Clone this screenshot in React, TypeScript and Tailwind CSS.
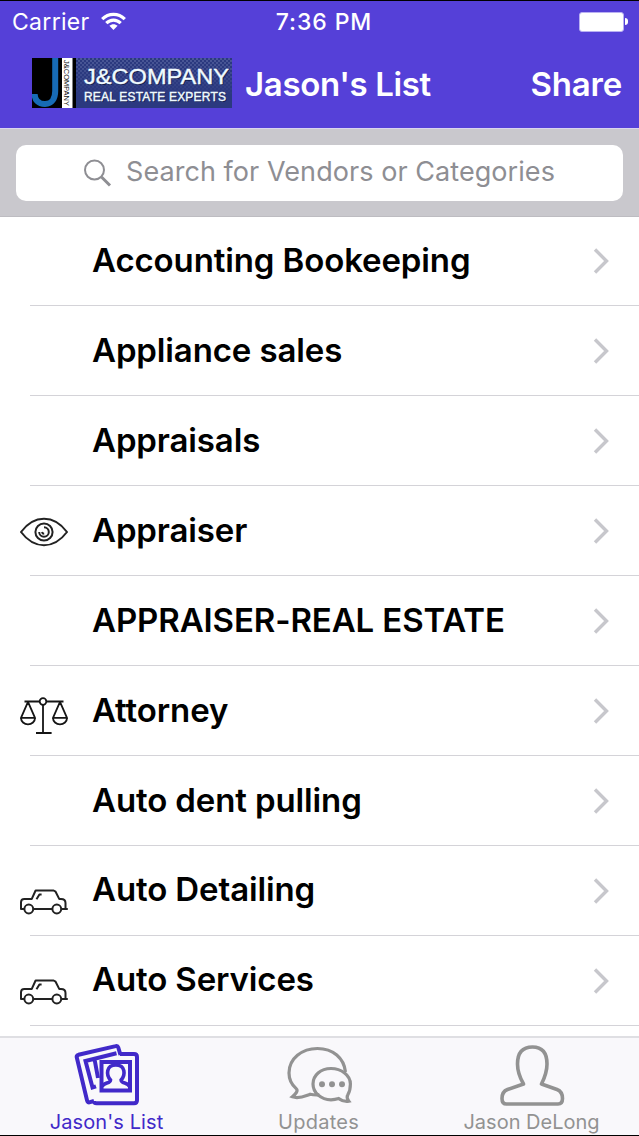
import type { ReactNode } from 'react';

type IconName = 'eye' | 'scales' | 'car';

interface Category {
  name: string;
  icon?: IconName;
}

const categories: Category[] = [
  { name: 'Accounting Bookeeping' },
  { name: 'Appliance sales' },
  { name: 'Appraisals' },
  { name: 'Appraiser', icon: 'eye' },
  { name: 'APPRAISER-REAL ESTATE' },
  { name: 'Attorney', icon: 'scales' },
  { name: 'Auto dent pulling' },
  { name: 'Auto Detailing', icon: 'car' },
  { name: 'Auto Services', icon: 'car' },
];

function EyeIcon() {
  return (
    <svg className="mt-[30px] h-8 w-12" viewBox="0 0 48 32" fill="none" stroke="#222" strokeWidth="2">
      <path d="M1 16C7 8 15 2.800 24 2.800S41 8 47 16C41 24 33 29.200 24 29.200S7 24 1 16Z" strokeLinejoin="round" />
      <circle cx="24" cy="16" r="8.6" />
      <path d="M24 11.200a4.800 4.800 0 1 1-4.800 4.800M22 16a2.200 2.200 0 0 0 2.200 1.800" />
    </svg>
  );
}

function ScalesIcon() {
  return (
    <svg className="mt-[30px] h-[38px] w-12" viewBox="0 0 48 38" fill="none" stroke="#151515" strokeWidth="1.8">
      <path d="M4.500 5.500h15.300M26.200 5.500h17.300M23 8.900v28M16 37h15.600" />
      <circle cx="23" cy="5.500" r="3.300" />
      <path d="M8 5.900 1 21.900h14L8 5.900ZM40 5.900l-7 16h14l-7-16Z" strokeLinejoin="round" />
      <path d="M1 21.900a7 6.500 0 0 0 14 0M33 21.900a7 6.500 0 0 0 14 0" />
    </svg>
  );
}

function CarIcon() {
  return (
    <svg className="mt-[43px] h-[26px] w-12" viewBox="0 0 48 26" fill="none" stroke="#222" strokeWidth="2" strokeLinejoin="round">
      <path d="M4.400 20H1v-6.800c0-2.200 1.300-3.300 3.400-3.300h7.400L15.600 1.500h18l2 1.200 3.600 7.200h1.800c3 0 4.500 1.400 4.500 4V20M13.200 20h19.200M41.400 20h6.400" />
      <circle cx="8.800" cy="20" r="4.400" />
      <circle cx="36.800" cy="20" r="4.400" />
      <path d="M21.600 5.500h-2.200L16.500 10.200" />
    </svg>
  );
}

const rowIcons: Record<IconName, ReactNode> = {
  eye: <EyeIcon />,
  scales: <ScalesIcon />,
  car: <CarIcon />,
};

function StatusBar() {
  return (
    <div className="flex h-[41px] items-center justify-between pr-[11px] pl-3">
      <div className="flex w-[170px] items-center gap-[11px]">
        <span className="pt-px text-[23px] tracking-[0.3px]">Carrier</span>
        <svg className="h-[19px] w-[25px]" viewBox="0 0 25 19" fill="none" stroke="currentColor" strokeWidth="3.2">
          <path d="M1.200 7.200c6.400-6.500 16.200-6.500 22.600 0M5.300 11.200c4.200-4.100 10.200-4.100 14.400 0" />
          <path d="m12.500 18-4.100-4.200c2.300-2.200 5.900-2.200 8.200 0L12.500 18Z" fill="currentColor" stroke="none" />
        </svg>
      </div>
      <span className="pt-px pl-[8px] text-[23px] font-medium tracking-[0.9px]">7:36 PM</span>
      <div className="flex w-[170px] items-center justify-end gap-px">
        <div className="h-5 w-[45px] rounded-[3px] border border-[#b9b0f2] bg-white" />
        <div className="h-[7px] w-[3px] rounded-r-full bg-white" />
      </div>
    </div>
  );
}

function CompanyLogo() {
  return (
    <svg className="mb-[4px] h-[50px] w-[200px]" viewBox="0 0 200 50">
      <defs>
        <pattern id="dots" width="4" height="4" patternUnits="userSpaceOnUse">
          <path d="M0 0h2v2H0ZM2 2h2v2H2Z" fill="#6570aa" opacity=".55" />
        </pattern>
        <linearGradient id="fade" x1="0" y1="0" x2="0" y2="1">
          <stop offset="0" stopColor="#2b397f" stopOpacity="0" />
          <stop offset=".75" stopColor="#2b397f" />
        </linearGradient>
      </defs>
      <rect width="200" height="50" fill="#2b397f" />
      <rect x="44" width="156" height="50" fill="url(#dots)" />
      <rect x="44" width="156" height="50" fill="url(#fade)" />
      <rect width="44" height="50" fill="#000" />
      <path d="M23.200 0v33c0 7-3 13-10.200 13C6 46 2.800 42 2.600 36" fill="none" stroke="#176bb5" strokeWidth="6" />
      <rect x="30" width="10.500" height="50" fill="#fff" />
      <text transform="translate(32.3 2) rotate(90)" fontFamily="Liberation Sans" fontSize="8" textLength="46" lengthAdjust="spacingAndGlyphs" fill="#111">J&amp;COMPANY</text>
      <g fontFamily="Liberation Sans" fill="#101a48">
        <text x="53" y="27" fontSize="22.5" textLength="145" lengthAdjust="spacingAndGlyphs">J&amp;COMPANY</text>
        <text x="53" y="44" fontSize="12" textLength="142" lengthAdjust="spacing">REAL ESTATE EXPERTS</text>
      </g>
      <g fontFamily="Liberation Sans" fill="#f0fbff" stroke="#f0fbff" strokeWidth=".4">
        <text x="52" y="25.500" fontSize="22.5" textLength="145" lengthAdjust="spacingAndGlyphs">J&amp;COMPANY</text>
        <text x="52" y="43" fontSize="12" textLength="142" lengthAdjust="spacing">REAL ESTATE EXPERTS</text>
      </g>
    </svg>
  );
}

function CategoryRow({ name, icon }: Category) {
  return (
    <li className="flex h-[89.9px] shrink-0">
      <div className="w-[30px] shrink-0 pl-5">{icon && rowIcons[icon]}</div>
      <div className="flex flex-1 items-center justify-between border-b border-[#d4d3d8] pr-[30px] pl-[62px]">
        <span className="text-[33px] font-semibold tracking-[-0.12px]">{name}</span>
        <svg className="mt-px h-[26px] w-4" viewBox="0 0 16 26" fill="none" stroke="#c7c7cc" strokeWidth="3.4">
          <path d="m2 1.500 11.500 11.500L2 24.500" />
        </svg>
      </div>
    </li>
  );
}

function TabBar() {
  return (
    <nav className="grid h-[99px] shrink-0 grid-cols-3 border-t-2 border-[#dfdfe3] bg-[#f9f8fb] text-[20px] text-[#929292]">
      <a className="flex flex-col items-center text-[#4129c9]">
        <svg className="mt-[5px] h-[64px] w-[66px]" viewBox="0 0 66 64" fill="none" stroke="currentColor" strokeWidth="4">
          <path d="M46.500 12 44.200 4.300Q43.600 2.600 41.700 3.100L4.500 11.800Q2.300 12.500 2.800 14.500L13.100 57.600Q13.700 60 16 59.200L20 58" />
          <path d="M42.500 10.300 11.500 18l7 26.500 3.500-1.200M20.500 16l3.500 19" />
          <path d="M20 58Q20 60.200 22.700 60.200H60q3 0 3-3V14q0-3-3-3H46" />
          <path d="M27.500 19h28.500v28.500H27.500Z" />
          <path d="M28 44c1-5 8.500-3 8.500-7-4.500-5-4.500-15 5.300-15s9.800 10 5.300 15c0 4 7.500 2 8.500 7" strokeWidth="3.6" />
        </svg>
        <span className="mt-[3px] leading-6 tracking-[0.1px]">Jason's List</span>
      </a>
      <a className="flex flex-col items-center pr-[2px]">
        <svg className="mt-[8px] h-[60px] w-[66px]" viewBox="0 0 66 60" fill="none" stroke="currentColor" strokeWidth="3.2">
          <path d="M59.500 26C58 12 47 2.500 31.500 2.500S3 12.500 3 27c0 7 3 12 7.200 15.600 2.300 2-.4 5.400-3.800 8.200 7 2.500 13-1 17.700-2.600 3 .7 6.200.8 9.300.6" />
          <path d="M45 22.500c-10.400 0-18 6.800-18 15.500s8 15.800 18 15.800c3 0 5.500-.5 7.700-1.200 3.600 2.500 6.300 3.300 10.100 2.600-1.500-2-2.500-4-1-6.300 1.700-2.800 2.600-6.500 2.600-10.900 0-8.700-9-15.500-19.400-15.500Z" />
          <g fill="currentColor" stroke="none">
            <circle cx="36" cy="38.300" r="3" />
            <circle cx="46" cy="38.300" r="3" />
            <circle cx="56" cy="38.300" r="3" />
          </g>
        </svg>
        <span className="mt-[4px] leading-6 tracking-[0.25px]">Updates</span>
      </a>
      <a className="flex flex-col items-center pr-[2px]">
        <svg className="mt-[5px] h-[64px] w-[66px]" viewBox="0 0 66 64" fill="none" stroke="currentColor" strokeWidth="3.6" strokeLinejoin="round">
          <path d="M24.500 41c-4-7-6-12-6-20C18.500 9 24 4 33.500 4s14.500 5 14.500 17c0 8-2 13-5.500 20l15.500 5.500c4 1.500 5.500 4.500 5.500 9 0 4-1.500 5.500-4.500 5.500H7.500C4.500 61 3 59.500 3 55.500c0-4.500 1.500-7.500 5.500-9L24.500 41Z" />
        </svg>
        <span className="mt-[3px] leading-6 tracking-[0px]">Jason DeLong</span>
      </a>
    </nav>
  );
}

export default function App() {
  return (
    <div className="flex h-[1136px] w-[639px] flex-col overflow-hidden border-y border-black bg-white font-['Inter',sans-serif] text-black">
      <header className="h-[127px] shrink-0 bg-[#5540d8] text-white">
        <StatusBar />
        <div className="flex h-[86px] items-center pr-[17px] pl-8">
          <CompanyLogo />
          <h1 className="ml-[13px] text-[33px] font-semibold tracking-[-0.35px]">Jason's List</h1>
          <button className="ml-auto text-[33px] font-semibold tracking-[-0.2px]">Share</button>
        </div>
      </header>

      <div className="h-[88.500px] shrink-0 border-t border-b border-t-[#d9d5ef] border-b-[#bdbcc1] bg-[#c9c8cd] px-4 pt-[15.500px]">
        <div className="flex h-14 items-center rounded-[10px] bg-white pl-[68px] text-[#8e8e93]">
          <svg className="h-7 w-7" viewBox="0 0 28 28" fill="none" stroke="currentColor" strokeWidth="2">
            <circle cx="10.500" cy="11" r="9.500" />
            <path d="m17.500 18 8.500 8.500" strokeWidth="3" />
          </svg>
          <span className="ml-[14px] text-[27px] tracking-[0.06px]">Search for Vendors or Categories</span>
        </div>
      </div>

      <ul className="flex flex-1 flex-col overflow-hidden">
        {categories.map((category) => (
          <CategoryRow key={category.name} {...category} />
        ))}
      </ul>

      <TabBar />
    </div>
  );
}
